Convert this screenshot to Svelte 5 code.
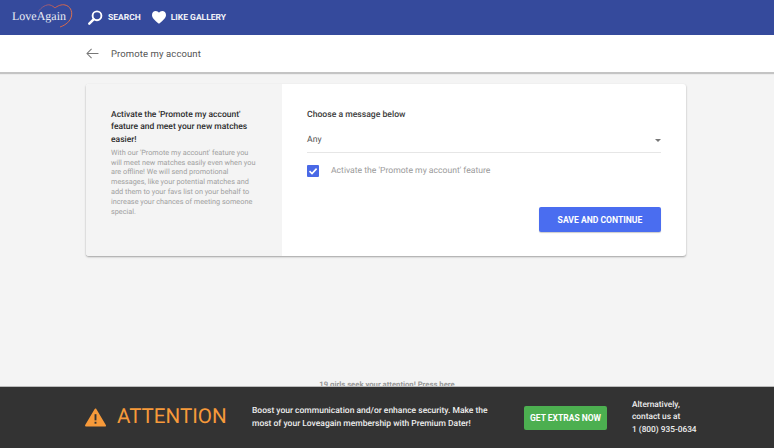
<script>
	const promo =
		"With our 'Promote my account' feature you will meet new matches easily even when you are offline! We will send promotional messages, like your potential matches and add them to your favs list on your behalf to increase your chances of meeting someone special.";
</script>

<div class="page">
	<header class="top">
		<div class="logo">
			<span>LoveAgain</span>
			<svg class="logo-heart" viewBox="0 0 36 26" width="36" height="26" fill="none">
				<defs>
					<linearGradient id="arc" x1="0" y1="0" x2="1" y2="0">
						<stop offset="0" stop-color="#7d5a90" />
						<stop offset="0.6" stop-color="#e2603f" />
						<stop offset="1" stop-color="#e8744a" />
					</linearGradient>
				</defs>
				<path d="M0 9 C3 4 9 1 12 2 C14 2.5 16 4 17 5 C19 3 24 1 27 2 C32 3 34.5 8 33.5 13 C32.5 18 28 22 22 24" stroke="url(#arc)" stroke-width="0.9" />
			</svg>
		</div>
		<a class="nav-item" href="#search">
			<svg viewBox="0 0 16 16" width="15" height="15" fill="none" stroke="#fff" stroke-width="2">
				<circle cx="9.6" cy="6.2" r="4.7" />
				<path d="M6 10 L1.4 14.6" stroke-linecap="round" stroke-width="2.6" />
			</svg>
			SEARCH
		</a>
		<a class="nav-item" href="#gallery">
			<svg viewBox="0 0 24 22" width="14" height="13" fill="#fff">
				<path d="M12 21.5 C4 15 0 11 0 6.5 C0 2.8 2.8 0 6.4 0 C8.7 0 10.8 1.2 12 3 C13.2 1.2 15.3 0 17.6 0 C21.2 0 24 2.8 24 6.5 C24 11 20 15 12 21.5 Z" />
			</svg>
			LIKE GALLERY
		</a>
	</header>

	<div class="subbar">
		<svg viewBox="0 0 14 12" width="13" height="11" fill="none" stroke="#777" stroke-width="1.1">
			<path d="M13.5 6 H1 M6 1 L1 6 L6 11" />
		</svg>
		<span>Promote my account</span>
	</div>

	<main class="content">
		<section class="card">
			<aside class="info">
				<h2>Activate the 'Promote my account' feature and meet your new matches easier!</h2>
				<p>{promo}</p>
			</aside>
			<div class="form">
				<div class="label">Choose a message below</div>
				<div class="select">
					<span>Any</span>
					<i class="caret"></i>
				</div>
				<div class="check">
					<span class="box">
						<svg viewBox="0 0 12 12" width="12" height="12" fill="none" stroke="#fff" stroke-width="1.6">
							<path d="M2.5 6.2 L5 8.6 L9.6 3.6" />
						</svg>
					</span>
					<span>Activate the 'Promote my account' feature</span>
				</div>
				<div class="actions">
					<button class="save">SAVE AND CONTINUE</button>
				</div>
			</div>
		</section>
	</main>

	<div class="peek">19 girls seek your attention! Press here</div>

	<footer class="bottom">
		<div class="attention">
			<svg viewBox="0 0 22 20" width="21" height="19">
				<path d="M11 1.5 L21 18.5 H1 Z" fill="#f79a3a" stroke="#f79a3a" stroke-width="2" stroke-linejoin="round" />
				<rect x="10" y="6.5" width="2" height="6.5" fill="#333" />
				<rect x="10" y="14.5" width="2" height="2" fill="#333" />
			</svg>
			<span>ATTENTION</span>
		</div>
		<p class="boost">Boost your communication and/or enhance security. Make the most of your Loveagain membership with Premium Dater!</p>
		<button class="extras">GET EXTRAS NOW</button>
		<p class="contact">Alternatively,<br />contact us at<br />1 (800) 935-0634</p>
	</footer>
</div>

<style>
	:global(body) {
		background: #f4f4f4;
		font-family: Roboto, sans-serif;
		text-rendering: geometricPrecision;
	}
	.page {
		width: 774px;
		height: 448px;
		overflow: hidden;
		display: flex;
		flex-direction: column;
		background: #f4f4f4;
	}
	.top {
		height: 35px;
		flex: none;
		background: #354a9c;
		display: flex;
		align-items: center;
		padding-left: 12px;
	}
	.logo {
		position: relative;
		width: 76px;
		font-family: 'Liberation Serif', serif;
		font-size: 12px;
		color: #e8eaf4;
		margin-top: -3px;
	}
	.logo-heart {
		position: absolute;
		left: 26px;
		top: -6px;
	}
	.nav-item {
		display: flex;
		align-items: center;
		gap: 5px;
		margin-right: 11px;
		color: #f2f3f8;
		font-size: 8.5px;
		font-weight: 700;
		text-decoration: none;
	}
	.subbar {
		height: 37px;
		flex: none;
		background: #fff;
		box-shadow: 0 2px 1px #c4c4c4;
		display: flex;
		align-items: center;
		gap: 12px;
		padding-left: 86px;
		font-size: 9.5px;
		letter-spacing: 0.1px;
		color: #555;
	}
	.subbar span {
		margin-top: 1px;
	}
	.content {
		flex: none;
		padding: 12px 86px 0;
	}
	.card {
		width: 600px;
		height: 172px;
		display: flex;
		background: #fff;
		border-radius: 3px;
		box-shadow: 0 1px 2px rgba(0, 0, 0, 0.35);
		overflow: hidden;
	}
	.info {
		width: 196px;
		flex: none;
		box-sizing: border-box;
		background: #f4f4f4;
		padding: 25px 25px 0;
	}
	.info h2 {
		margin: 0;
		font-size: 8.5px;
		line-height: 12.3px;
		font-weight: 500;
		color: #2e2e2e;
	}
	.info p {
		margin: 2px 0 0;
		font-size: 7.3px;
		line-height: 9.8px;
		color: #a0a0a0;
	}
	.form {
		flex: 1;
		box-sizing: border-box;
		padding: 26px 25px 0;
	}
	.label {
		font-size: 8.65px;
		font-weight: 500;
		color: #3c3c3c;
		line-height: 11px;
	}
	.select {
		margin-top: 13px;
		height: 18px;
		display: flex;
		justify-content: space-between;
		align-items: flex-start;
		border-bottom: 1px solid #e6e6e6;
		font-size: 8.7px;
		line-height: 11px;
		color: #555;
	}
	.select span {
		margin-top: 1px;
	}
	.caret {
		margin-top: 4.5px;
		border: 3px solid transparent;
		border-top: 3px solid #777;
		border-bottom: 0;
	}
	.check {
		margin-top: 12px;
		display: flex;
		align-items: center;
		gap: 12px;
		font-size: 8.6px;
		color: #9a9a9a;
	}
	.box {
		width: 12px;
		height: 12px;
		background: #4a69e6;
		border-radius: 1px;
		display: block;
		line-height: 0;
	}
	.actions {
		margin-top: 30px;
		display: flex;
		justify-content: flex-end;
	}
	.save {
		width: 122px;
		height: 25px;
		border: 0;
		border-radius: 2px;
		background: #4a6df0;
		color: #fff;
		font: 700 8.6px Roboto, sans-serif;
		box-shadow: 0 1px 1px rgba(0, 0, 0, 0.2);
	}
	.peek {
		flex: none;
		margin-top: 124px;
		height: 10px;
		line-height: 10px;
		text-align: center;
		font-size: 7.7px;
		font-weight: 700;
		color: #999;
	}
	.bottom {
		flex: none;
		height: 61px;
		margin-top: -4px;
		position: relative;
		background: #333;
		border-top: 1px solid #bbb;
		display: flex;
		align-items: center;
		color: #eee;
		font-size: 8.5px;
		line-height: 12.2px;
		font-weight: 500;
	}
	.attention {
		display: flex;
		align-items: center;
		gap: 11px;
		margin-left: 85px;
		width: 167px;
		color: #f79a3a;
		font-size: 20.6px;
		font-weight: 400;
	}
	.boost {
		margin: 0;
		width: 250px;
	}
	.extras {
		margin-left: 22px;
		width: 83px;
		height: 24px;
		padding: 0;
		border: 0;
		border-radius: 2px;
		background: #4caf50;
		color: #fff;
		font: 700 8.5px Roboto, sans-serif;
	}
	.contact {
		margin: 0 0 0 25px;
		font-size: 8.3px;
	}
</style>
